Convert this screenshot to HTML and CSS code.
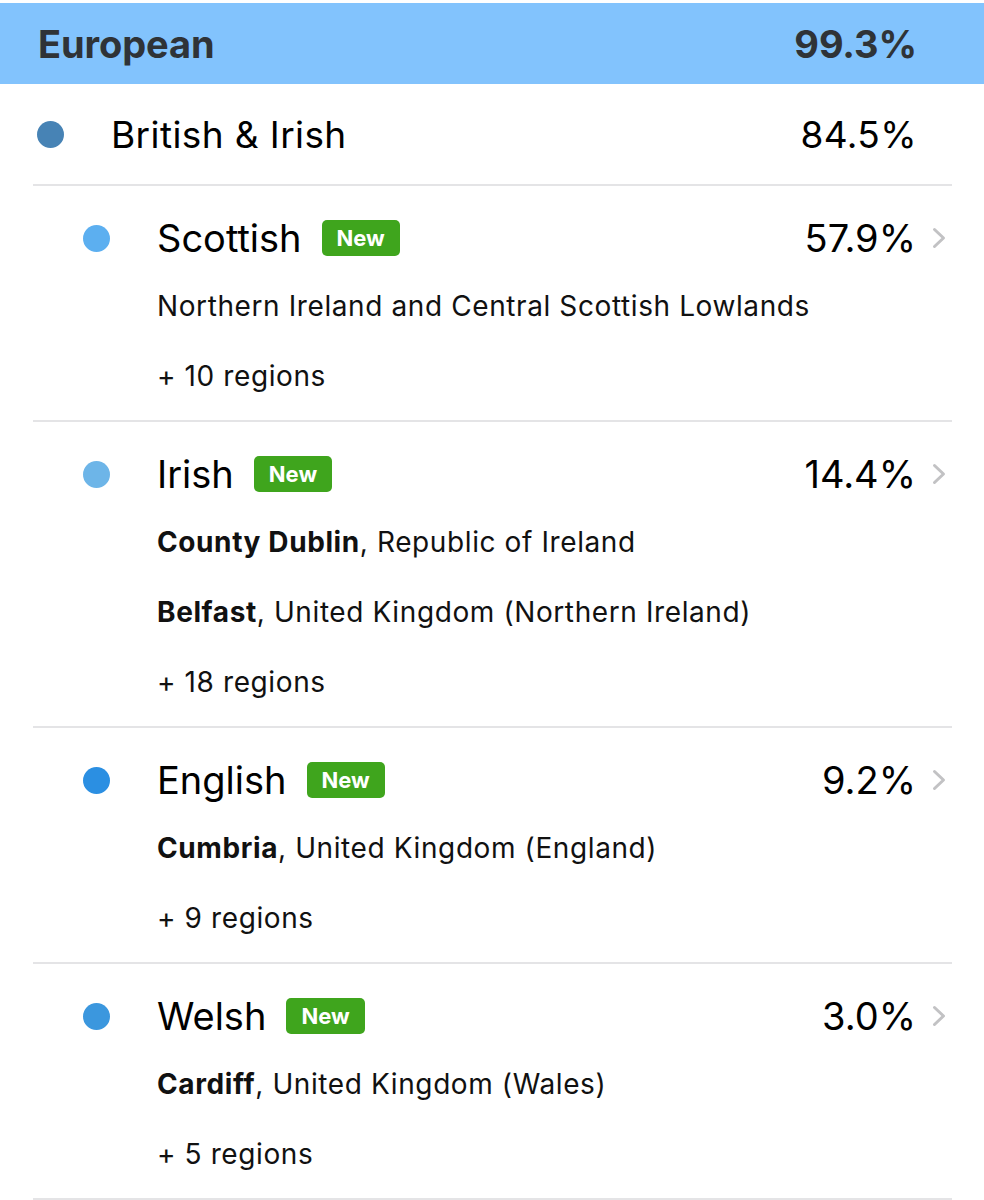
FILE: index.html
```html
<!DOCTYPE html>
<html>
<head>
<meta charset="utf-8">
<link rel="stylesheet" href="styles.css">
</head>
<body>
<div class="page">
  <div class="header">
    <span class="header-name">European</span>
    <span class="header-pct">99.3%</span>
  </div>
  <div class="list">
    <div class="group-row">
      <span class="dot dot-british"></span>
      <span class="group-name">British &amp; Irish</span>
      <span class="group-pct">84.5%</span>
    </div>

    <div class="sub-row">
      <div class="sub-head">
        <span class="dot dot-scottish"></span>
        <span class="sub-name">Scottish</span>
        <span class="badge">New</span>
        <span class="sub-pct">57.9%</span>
        <svg class="chev" width="14" height="22" viewBox="0 0 14 22"><path d="M2.5 2.5 L11.5 11 L2.5 19.5" fill="none" stroke="#c2c2c4" stroke-width="3" stroke-linecap="round" stroke-linejoin="round"/></svg>
      </div>
      <div class="sub-lines">
        <div class="line">Northern Ireland and Central Scottish Lowlands</div>
        <div class="line">+ 10 regions</div>
      </div>
    </div>

    <div class="sub-row">
      <div class="sub-head">
        <span class="dot dot-irish"></span>
        <span class="sub-name">Irish</span>
        <span class="badge">New</span>
        <span class="sub-pct">14.4%</span>
        <svg class="chev" width="14" height="22" viewBox="0 0 14 22"><path d="M2.5 2.5 L11.5 11 L2.5 19.5" fill="none" stroke="#c2c2c4" stroke-width="3" stroke-linecap="round" stroke-linejoin="round"/></svg>
      </div>
      <div class="sub-lines">
        <div class="line"><b>County Dublin</b>, Republic of Ireland</div>
        <div class="line"><b>Belfast</b>, United Kingdom (Northern Ireland)</div>
        <div class="line">+ 18 regions</div>
      </div>
    </div>

    <div class="sub-row">
      <div class="sub-head">
        <span class="dot dot-english"></span>
        <span class="sub-name">English</span>
        <span class="badge">New</span>
        <span class="sub-pct">9.2%</span>
        <svg class="chev" width="14" height="22" viewBox="0 0 14 22"><path d="M2.5 2.5 L11.5 11 L2.5 19.5" fill="none" stroke="#c2c2c4" stroke-width="3" stroke-linecap="round" stroke-linejoin="round"/></svg>
      </div>
      <div class="sub-lines">
        <div class="line"><b>Cumbria</b>, United Kingdom (England)</div>
        <div class="line">+ 9 regions</div>
      </div>
    </div>

    <div class="sub-row">
      <div class="sub-head">
        <span class="dot dot-welsh"></span>
        <span class="sub-name">Welsh</span>
        <span class="badge">New</span>
        <span class="sub-pct">3.0%</span>
        <svg class="chev" width="14" height="22" viewBox="0 0 14 22"><path d="M2.5 2.5 L11.5 11 L2.5 19.5" fill="none" stroke="#c2c2c4" stroke-width="3" stroke-linecap="round" stroke-linejoin="round"/></svg>
      </div>
      <div class="sub-lines">
        <div class="line"><b>Cardiff</b>, United Kingdom (Wales)</div>
        <div class="line">+ 5 regions</div>
      </div>
    </div>
  </div>
</div>
</body>
</html>
```

FILE: styles.css
```css
html, body {
  margin: 0;
  padding: 0;
  background: #ffffff;
}

.page {
  width: 984px;
  padding-top: 3px;
  font-family: "Inter", "Helvetica Neue", "Liberation Sans", Arial, sans-serif;
  color: #000000;
}

.header {
  height: 81px;
  background: #82c3fd;
  display: flex;
  align-items: center;
  justify-content: space-between;
  padding: 0 67px 0 38px;
  color: #2f3337;
  font-weight: 700;
  font-size: 38px;
  letter-spacing: -0.1px;
}

.list {
  margin: 0 32px 0 33px;
}

.group-row {
  display: flex;
  align-items: center;
  height: 100px;
  padding: 0 35px 0 4px;
  border-bottom: 2px solid #e4e4e6;
}

.group-name {
  font-size: 37px;
  letter-spacing: 0.4px;
  margin-left: 47px;
  flex: 1;
}

.group-pct {
  font-size: 37px;
  letter-spacing: 0.4px;
}

.dot {
  width: 27px;
  height: 27px;
  border-radius: 50%;
  flex: none;
}

.dot-british { background: #4783b5; }
.dot-scottish { background: #5caff0; }
.dot-irish { background: #6db5e8; }
.dot-english { background: #2b8fe2; }
.dot-welsh { background: #3b97de; }

.sub-row {
  padding: 29px 0 24px 0;
  border-bottom: 2px solid #e4e4e6;
}

.sub-head {
  display: flex;
  align-items: center;
  height: 46px;
  padding: 0 6px 0 50px;
}

.sub-name {
  font-size: 38px;
  margin-left: 47px;
}

.badge {
  margin-left: 20px;
  background: #3fa51d;
  color: #ffffff;
  font-weight: 700;
  font-size: 22px;
  height: 36px;
  line-height: 36px;
  padding: 0 15px;
  border-radius: 5px;
}

.sub-pct {
  margin-left: auto;
  font-size: 38px;
}

.chev {
  margin-left: 16px;
  flex: none;
}

.sub-lines {
  margin-left: 124px;
  padding-top: 25px;
  display: flex;
  flex-direction: column;
  gap: 30px;
}

.line {
  font-size: 28px;
  line-height: 40px;
  color: #111111;
  letter-spacing: 0.6px;
}

.line b {
  font-weight: 700;
}
```
